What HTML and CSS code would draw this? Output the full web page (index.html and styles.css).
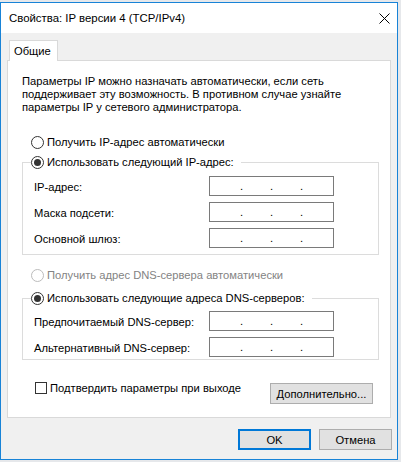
FILE: index.html
```html
<!DOCTYPE html>
<html lang="ru">
<head>
<meta charset="utf-8">
<title>Свойства: IP версии 4 (TCP/IPv4)</title>
<link rel="stylesheet" href="styles.css">
</head>
<body>
<div class="window">
  <div class="titlebar">
    <span class="title">Свойства: IP версии 4 (TCP/IPv4)</span>
    <svg class="close" width="11" height="11" viewBox="0 0 11 11"><path d="M0.5 0.5 L10.5 10.5 M10.5 0.5 L0.5 10.5" stroke="#000" stroke-width="1" fill="none"/></svg>
  </div>
  <div class="client">
    <div class="tabs"><div class="tab">Общие</div></div>
    <div class="panel">
      <p class="intro">Параметры IP можно назначать автоматически, если сеть<br>поддерживает эту возможность. В противном случае узнайте<br>параметры IP у сетевого администратора.</p>
      <div class="radio r1"><span class="circle"></span><span>Получить IP-адрес автоматически</span></div>
      <div class="group g1">
        <div class="legend"><span class="circle checked"></span><span>Использовать следующий IP-адрес:</span></div>
        <div class="rows">
          <div class="row"><span class="lbl">IP-адрес:</span><div class="ip"><span class="seg">.</span><span class="seg">.</span><span class="seg">.</span></div></div>
          <div class="row"><span class="lbl">Маска подсети:</span><div class="ip"><span class="seg">.</span><span class="seg">.</span><span class="seg">.</span></div></div>
          <div class="row"><span class="lbl">Основной шлюз:</span><div class="ip"><span class="seg">.</span><span class="seg">.</span><span class="seg">.</span></div></div>
        </div>
      </div>
      <div class="radio r3 disabled"><span class="circle"></span><span>Получить адрес DNS-сервера автоматически</span></div>
      <div class="group g2">
        <div class="legend"><span class="circle checked"></span><span>Использовать следующие адреса DNS-серверов:</span></div>
        <div class="rows">
          <div class="row"><span class="lbl">Предпочитаемый DNS-сервер:</span><div class="ip"><span class="seg">.</span><span class="seg">.</span><span class="seg">.</span></div></div>
          <div class="row"><span class="lbl">Альтернативный DNS-сервер:</span><div class="ip"><span class="seg">.</span><span class="seg">.</span><span class="seg">.</span></div></div>
        </div>
      </div>
      <div class="footer-row">
        <div class="check"><span class="box"></span><span>Подтвердить параметры при выходе</span></div>
        <div class="btn adv">Дополнительно...</div>
      </div>
    </div>
    <div class="actions">
      <div class="btn ok">OK</div>
      <div class="btn">Отмена</div>
    </div>
  </div>
</div>
</body>
</html>
```
FILE: styles.css
```css
* { box-sizing: border-box; }
html, body { margin: 0; padding: 0; }
body {
  background: #e6e8eb;
  font-family: "Liberation Sans", Arial, sans-serif;
  font-size: 11.2px;
  color: #000;
  width: 401px;
  height: 462px;
  overflow: hidden;
}
.window {
  margin-top: 2px;
  width: 398px;
  height: 458px;
  border: 1px solid #1883d7;
  background: #f0f0f0;
  display: flex;
  flex-direction: column;
}
.titlebar {
  height: 30px;
  background: #fff;
  display: flex;
  align-items: center;
  padding-left: 8px;
  flex: none;
}
.title { line-height: 14px; font-size: 11.4px; }
.close { margin-left: auto; margin-right: 7px; }
.client {
  padding: 0 6px;
  display: flex;
  flex-direction: column;
}
.tabs { display: flex; margin-top: 7px; }
.tab {
  position: relative;
  z-index: 1;
  margin-left: 2px;
  width: 49px;
  height: 21px;
  margin-bottom: -1px;
  background: #fff;
  border: 1px solid #d9d9d9;
  border-bottom: none;
  padding: 3px 0 0 4px;
  line-height: 14px;
}
.panel {
  height: 358px;
  background: #fff;
  border: 1px solid #d9d9d9;
  padding: 14px 0 0 14px;
  display: flex;
  flex-direction: column;
}
.intro { margin: 0; line-height: 13px; }
.radio, .legend {
  display: flex;
  align-items: center;
  height: 16px;
  gap: 3px;
}
.radio { margin-left: 9px; }
.r1 { margin-top: 20px; }
.r3 { margin-top: 12px; }
.disabled { color: #838383; }
.circle {
  width: 13px;
  height: 13px;
  border: 1px solid #333;
  border-radius: 50%;
  background: #fff;
  display: flex;
  align-items: center;
  justify-content: center;
  flex: none;
}
.disabled .circle { border-color: #bcbcbc; }
.circle.checked::after {
  content: "";
  width: 7px;
  height: 7px;
  border-radius: 50%;
  background: #333;
}
.group {
  width: 357px;
  border: 1px solid #dcdcdc;
  padding: 0 0 6px 11px;
}
.g1 { margin-top: 12px; }
.g2 { margin-top: 15px; padding-bottom: 2px; }
.legend {
  width: fit-content;
  margin-top: -9px;
  margin-left: -3px;
  background: #fff;
  padding-right: 7px;
}
.rows { display: flex; flex-direction: column; gap: 6px; margin-top: 6px; }
.g2 .rows { margin-top: 5px; }
.row { display: flex; align-items: center; height: 20px; }
.lbl { width: 175px; padding-top: 2px; white-space: nowrap; }
.ip {
  width: 125px;
  height: 20px;
  border: 1px solid #7a7a7a;
  display: flex;
  padding-left: 3px;
  line-height: 18px;
  flex: none;
}
.seg { width: 30px; text-align: right; }
.footer-row {
  margin-top: 22px;
  display: flex;
  justify-content: space-between;
  align-items: flex-start;
}
.check {
  display: flex;
  align-items: center;
  gap: 3px;
  margin-left: 13px;
  height: 12px;
}
.box {
  width: 12px;
  height: 12px;
  border: 1px solid #333;
  background: #fff;
}
.btn {
  height: 21px;
  background: #e1e1e1;
  border: 1px solid #adadad;
  display: flex;
  align-items: center;
  justify-content: center;
  width: 73px;
}
.adv { width: 103px; margin-top: 1px; margin-right: 17px; }
.actions {
  display: flex;
  justify-content: flex-end;
  gap: 8px;
  margin-top: 11px;
  margin-right: -1px;
}
.ok { border: 2px solid #0078d7; }
```
